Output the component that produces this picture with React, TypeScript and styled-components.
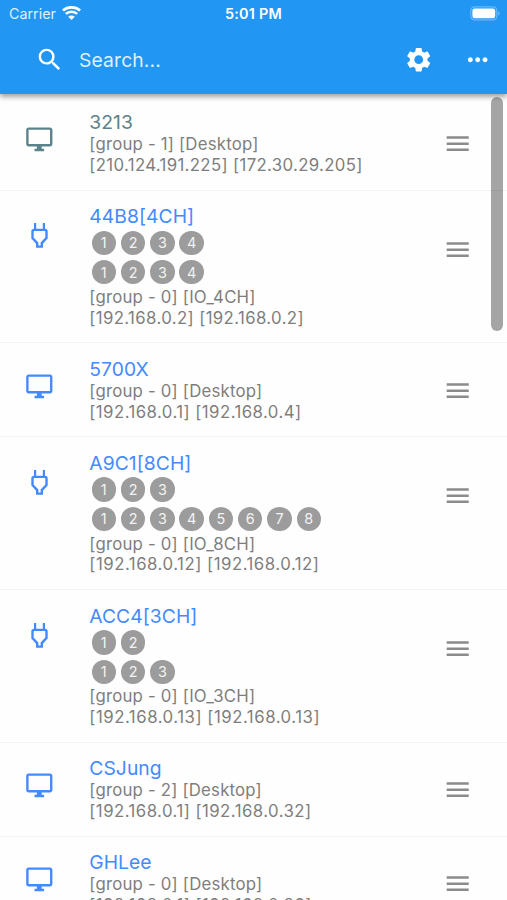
import React from "react";
import styled, { createGlobalStyle } from "styled-components";
import {
  MdMenu,
  MdMoreHoriz,
  MdOutlineDesktopWindows,
  MdSearch,
  MdSettings,
} from "react-icons/md";

const GlobalStyle = createGlobalStyle`
  * { box-sizing: border-box; }
  body {
    margin: 0;
    background: #fefefe;
    font-family: Inter, "Liberation Sans", sans-serif;
    overflow: hidden;
  }
`;

const Screen = styled.div`
  position: relative;
  width: 507px;
  height: 900px;
  overflow: hidden;
  display: flex;
  flex-direction: column;
`;

const Header = styled.header`
  flex: none;
  z-index: 1;
  height: 94px;
  background: #2196f3;
  color: #fff;
  box-shadow: 0 3px 5px rgba(0, 0, 0, 0.36);
`;

const StatusBar = styled.div`
  height: 26px;
  padding: 0 7px 0 9px;
  display: grid;
  grid-template-columns: 1fr auto 1fr;
  align-items: center;
`;

const Carrier = styled.div`
  display: flex;
  align-items: center;
  gap: 6px;
  font-size: 14.3px;
  color: #dff0fe;
`;

const Clock = styled.div`
  padding-top: 1px;
  margin-right: 2px;
  font-size: 14.4px;
  font-weight: 600;
  letter-spacing: 0.25px;
`;

const BatterySlot = styled.div`
  display: flex;
  justify-content: flex-end;
`;

const Toolbar = styled.div`
  height: 68px;
  padding: 0 14.5px 0 34.8px;
  display: flex;
  align-items: center;
`;

const SearchText = styled.div`
  flex: 1;
  padding-left: 14.8px;
  font-size: 19.3px;
  letter-spacing: 0.15px;
  color: #dff0fe;
`;

const Action = styled.div`
  display: flex;
  margin-left: 29.4px;
`;

const List = styled.main`
  flex: 1;
  padding-top: 2.7px;
  min-height: 0;
  overflow: hidden;
`;

const Row = styled.article<{ $height: number }>`
  height: ${(p) => p.$height}px;
  display: grid;
  grid-template-columns: 89.3px 1fr 64.5px;
  border-bottom: 1px solid #f2f2f2;
`;

const Leading = styled.div<{ $center: number; $muted?: boolean }>`
  height: ${(p) => p.$center * 2}px;
  padding-right: 10.9px;
  display: flex;
  align-items: center;
  justify-content: center;
  color: ${(p) => (p.$muted ? "#5c828b" : "#448aff")};
`;

const Body = styled.div`
  padding-top: 13.6px;
`;

const Name = styled.h2<{ $muted?: boolean }>`
  margin: 0;
  height: 24px;
  line-height: 24px;
  font-size: 19.3px;
  font-weight: 400;
  letter-spacing: 0.05px;
  color: ${(p) => (p.$muted ? "#5c828b" : "#448aff")};
`;

const Detail = styled.p<{ $tracking?: number }>`
  margin: 0;
  line-height: 20.7px;
  font-size: 16.8px;
  letter-spacing: ${(p) => p.$tracking ?? 0.2}px;
  white-space: nowrap;
  color: #7e7e7e;
`;

const Channels = styled.div`
  height: 29.4px;
  padding-left: 2.3px;
  display: flex;
  align-items: center;
  gap: 4.9px;
`;

const Channel = styled.span`
  width: 24.4px;
  height: 24.4px;
  border-radius: 50%;
  display: flex;
  align-items: center;
  justify-content: center;
  background: #9c9c9c;
  color: #f3f3f3;
  font-size: 14.4px;
`;

const Handle = styled.div<{ $center: number }>`
  height: ${(p) => p.$center * 2}px;
  display: flex;
  align-items: center;
  color: #8b8b8b;
`;

const ScrollThumb = styled.div`
  position: absolute;
  z-index: 2;
  top: 97px;
  right: 4px;
  width: 12px;
  height: 233.5px;
  border-radius: 6px;
  background: rgba(0, 0, 0, 0.35);
`;

type Device = {
  name: string;
  group: number;
  type: string;
  ips: [string, string];
  ipTracking: number;
  channels?: [number, number];
  muted?: boolean;
};

const devices: Device[] = [
  { name: "3213", group: 1, type: "Desktop", ips: ["210.124.191.225", "172.30.29.205"], ipTracking: 0.34, muted: true },
  { name: "44B8[4CH]", group: 0, type: "IO_4CH", ips: ["192.168.0.2", "192.168.0.2"], ipTracking: 0.37, channels: [4, 4] },
  { name: "5700X", group: 0, type: "Desktop", ips: ["192.168.0.1", "192.168.0.4"], ipTracking: 0.44 },
  { name: "A9C1[8CH]", group: 0, type: "IO_8CH", ips: ["192.168.0.12", "192.168.0.12"], ipTracking: 0.51, channels: [3, 8] },
  { name: "ACC4[3CH]", group: 0, type: "IO_3CH", ips: ["192.168.0.13", "192.168.0.13"], ipTracking: 0.52, channels: [2, 3] },
  { name: "CSJung", group: 2, type: "Desktop", ips: ["192.168.0.1", "192.168.0.32"], ipTracking: 0.45 },
  { name: "GHLee", group: 0, type: "Desktop", ips: ["192.168.0.1", "192.168.0.36"], ipTracking: 0.45 },
];

const PlugIcon = () => (
  <svg width="17" height="25" viewBox="0 0 17 25" fill="none" stroke="currentColor" strokeWidth="2.4">
    <path d="M4.1 0v6.5M12.9 0v6.5" strokeWidth="2.2" />
    <path d="M3 6.9h11q1.5 0 1.5 1.5v6.7l-4.7 5v3.5H6.2v-3.5l-4.7-5V8.4q0-1.5 1.5-1.5z" />
  </svg>
);

const WifiIcon = () => (
  <svg width="19" height="14" viewBox="0 0 19 14" fill="none" stroke="#fff">
    <path d="M.9 4.6C5.6.4 13.4.4 18.1 4.6" strokeWidth="2.7" />
    <path d="M3.8 7.9c3.1-2.9 8.3-2.9 11.4 0" strokeWidth="2.5" />
    <path d="M9.5 14 6.2 10.7c1.8-1.7 4.8-1.7 6.6 0z" fill="#fff" stroke="none" />
  </svg>
);

const BatteryIcon = () => (
  <svg width="30" height="15" viewBox="0 0 30 15">
    <rect x="0.8" y="0.9" width="26" height="13" rx="3.8" fill="none" stroke="#6ab8f7" strokeWidth="1.2" />
    <rect x="2.4" y="2.5" width="22.8" height="9.8" rx="2.2" fill="#fff" />
    <path d="M28 5.3q1.6.6 1.6 2.1T28 9.5z" fill="#6ab8f7" />
  </svg>
);

const ChannelRow = ({ count }: { count: number }) => (
  <Channels>
    {Array.from({ length: count }, (_, i) => (
      <Channel key={i}>{i + 1}</Channel>
    ))}
  </Channels>
);

const DeviceRow = ({ device }: { device: Device }) => {
  const { name, group, type, ips, ipTracking, channels, muted } = device;
  return (
    <Row $height={channels ? 152.8 : 93.9}>
      <Leading $center={channels ? 45.4 : 42.8} $muted={muted}>
        {channels ? <PlugIcon /> : <MdOutlineDesktopWindows size={28.6} />}
      </Leading>
      <Body>
        <Name $muted={muted}>{name}</Name>
        {channels?.map((count, i) => <ChannelRow key={i} count={count} />)}
        <Detail>{`[group - ${group}] [${type}]`}</Detail>
        <Detail $tracking={ipTracking}>{`[${ips[0]}] [${ips[1]}]`}</Detail>
      </Body>
      <Handle $center={channels ? 58.7 : 47}>
        <MdMenu size={29.4} />
      </Handle>
    </Row>
  );
};

export default function App() {
  return (
    <>
      <GlobalStyle />
      <Screen>
        <Header>
          <StatusBar>
            <Carrier>
              Carrier
              <WifiIcon />
            </Carrier>
            <Clock>5:01 PM</Clock>
            <BatterySlot>
              <BatteryIcon />
            </BatterySlot>
          </StatusBar>
          <Toolbar>
            <MdSearch size={29.4} />
            <SearchText>Search...</SearchText>
            <Action>
              <MdSettings size={29.4} />
            </Action>
            <Action>
              <MdMoreHoriz size={29.4} />
            </Action>
          </Toolbar>
        </Header>
        <List>
          {devices.map((device) => (
            <DeviceRow key={device.name} device={device} />
          ))}
        </List>
        <ScrollThumb />
      </Screen>
    </>
  );
}
